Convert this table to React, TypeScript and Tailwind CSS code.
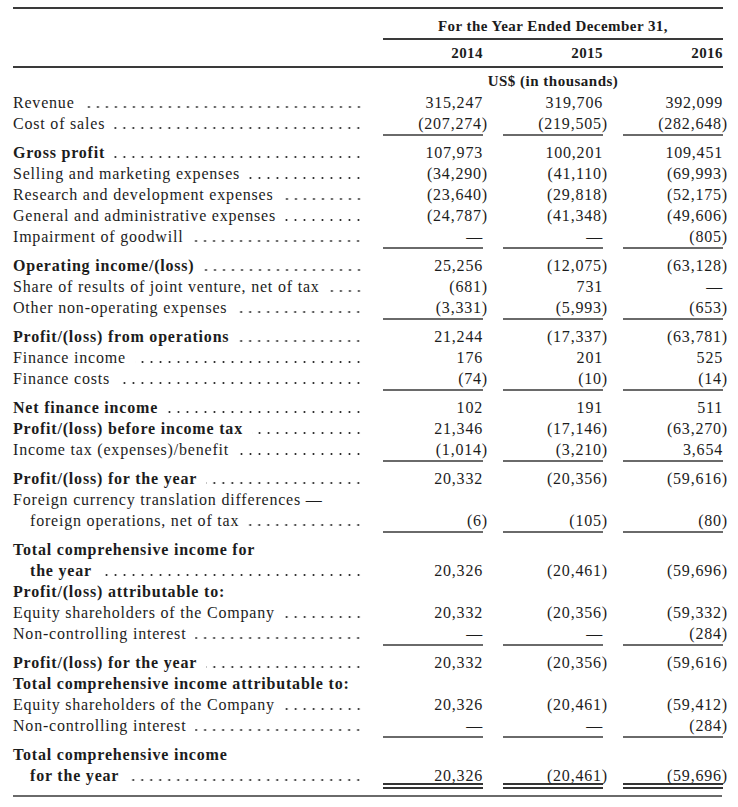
import React from "react";

type Row = {
  label: string;
  bold?: boolean;
  indent?: boolean;
  values?: [string, string, string];
  rule?: "single" | "double";
};

const rows: Row[] = [
  { label: "Revenue", values: ["315,247", "319,706", "392,099"] },
  { label: "Cost of sales", values: ["(207,274)", "(219,505)", "(282,648)"], rule: "single" },
  { label: "Gross profit", bold: true, values: ["107,973", "100,201", "109,451"] },
  { label: "Selling and marketing expenses", values: ["(34,290)", "(41,110)", "(69,993)"] },
  { label: "Research and development expenses", values: ["(23,640)", "(29,818)", "(52,175)"] },
  { label: "General and administrative expenses", values: ["(24,787)", "(41,348)", "(49,606)"] },
  { label: "Impairment of goodwill", values: ["—", "—", "(805)"], rule: "single" },
  { label: "Operating income/(loss)", bold: true, values: ["25,256", "(12,075)", "(63,128)"] },
  { label: "Share of results of joint venture, net of tax", values: ["(681)", "731", "—"] },
  { label: "Other non-operating expenses", values: ["(3,331)", "(5,993)", "(653)"], rule: "single" },
  { label: "Profit/(loss) from operations", bold: true, values: ["21,244", "(17,337)", "(63,781)"] },
  { label: "Finance income", values: ["176", "201", "525"] },
  { label: "Finance costs", values: ["(74)", "(10)", "(14)"], rule: "single" },
  { label: "Net finance income", bold: true, values: ["102", "191", "511"] },
  { label: "Profit/(loss) before income tax", bold: true, values: ["21,346", "(17,146)", "(63,270)"] },
  { label: "Income tax (expenses)/benefit", values: ["(1,014)", "(3,210)", "3,654"], rule: "single" },
  { label: "Profit/(loss) for the year", bold: true, values: ["20,332", "(20,356)", "(59,616)"] },
  { label: "Foreign currency translation differences —" },
  { label: "foreign operations, net of tax", indent: true, values: ["(6)", "(105)", "(80)"], rule: "single" },
  { label: "Total comprehensive income for", bold: true },
  { label: "the year", bold: true, indent: true, values: ["20,326", "(20,461)", "(59,696)"] },
  { label: "Profit/(loss) attributable to:", bold: true },
  { label: "Equity shareholders of the Company", values: ["20,332", "(20,356)", "(59,332)"] },
  { label: "Non-controlling interest", values: ["—", "—", "(284)"], rule: "single" },
  { label: "Profit/(loss) for the year", bold: true, values: ["20,332", "(20,356)", "(59,616)"] },
  { label: "Total comprehensive income attributable to:", bold: true },
  { label: "Equity shareholders of the Company", values: ["20,326", "(20,461)", "(59,412)"] },
  { label: "Non-controlling interest", values: ["—", "—", "(284)"], rule: "single" },
  { label: "Total comprehensive income", bold: true },
  { label: "for the year", bold: true, indent: true, values: ["20,326", "(20,461)", "(59,696)"], rule: "double" },
];

// closing paren hangs past the column edge, like a typeset accounting table
const Amount = ({ v }: { v: string }) => {
  if (v.startsWith("(") && v.endsWith(")")) {
    return (
      <>
        {v.slice(0, -1)}
        <span className="-mr-[5px]">)</span>
      </>
    );
  }
  return <>{v}</>;
};

const DataRow = ({ row, afterRule }: { row: Row; afterRule: boolean }) => {
  const cellBase =
    row.rule === "double"
      ? "h-[24px] text-right leading-[21px] border-b-[6px] border-double border-[#333]"
      : row.rule === "single"
        ? "text-right leading-[21px] border-b-2 border-[#6a6a6a]"
        : "text-right leading-[21px]";

  return (
    <div className={"grid grid-cols-[350px_100px_100px_100px] gap-x-[20px] " + (afterRule ? "mt-[6px]" : "")}>
      <div className={"flex items-baseline leading-[21px] " + (row.indent ? "pl-[17px] " : "") + (row.bold ? "font-bold" : "")}>
        <span className="whitespace-nowrap">{row.label}</span>
        {row.values && (
          // dot leader, tiles anchored to the right so every row's dots line up
          <div className="ml-[9px] h-[2px] flex-1 bg-[radial-gradient(circle,#2a2a2a_0.85px,transparent_1.25px)] bg-[length:9px_2px] bg-right bg-repeat-x" />
        )}
      </div>
      {row.values
        ? row.values.map((v, i) => (
            <div key={i} className={cellBase}>
              <Amount v={v} />
            </div>
          ))
        : [0, 1, 2].map((i) => <div key={i} />)}
    </div>
  );
};

export default function App() {
  return (
    <div className="min-h-screen bg-white pt-[7px] text-[#1c1c1c] [font-family:'Liberation_Serif','Times_New_Roman',serif]">
      <div className="ml-[13px] w-[710px] border-t-2 border-[#3a3a3a] pb-[6px] text-[16px] tracking-[0.8px]">
        {/* Column headings */}
        <div className="grid grid-cols-[350px_340px] gap-x-[20px] text-[15px] font-bold tracking-[0.45px]">
          <div />
          <div className="border-b-2 border-[#3a3a3a] pb-[1px] pt-[7px] text-center leading-[21px]">
            For the Year Ended December 31,
          </div>
        </div>
        <div className="grid grid-cols-[350px_100px_100px_100px] gap-x-[20px] border-b-2 border-[#3a3a3a] pb-[2px] pt-[3px] text-[15px] font-bold leading-[21px] tracking-[0.45px]">
          <div />
          <div className="text-right">2014</div>
          <div className="text-right">2015</div>
          <div className="text-right">2016</div>
        </div>
        <div className="grid grid-cols-[350px_340px] gap-x-[20px] pt-[3px] text-[15px] font-bold leading-[21px] tracking-[0.5px]">
          <div />
          <div className="text-center">US$ (in thousands)</div>
        </div>

        {/* Statement rows */}
        {rows.map((row, i) => (
          <DataRow key={i} row={row} afterRule={i > 0 && rows[i - 1].rule === "single"} />
        ))}
      </div>
      <div className="ml-[13px] w-[709px] border-t-2 border-[#6a6a6a]" />
    </div>
  );
}
